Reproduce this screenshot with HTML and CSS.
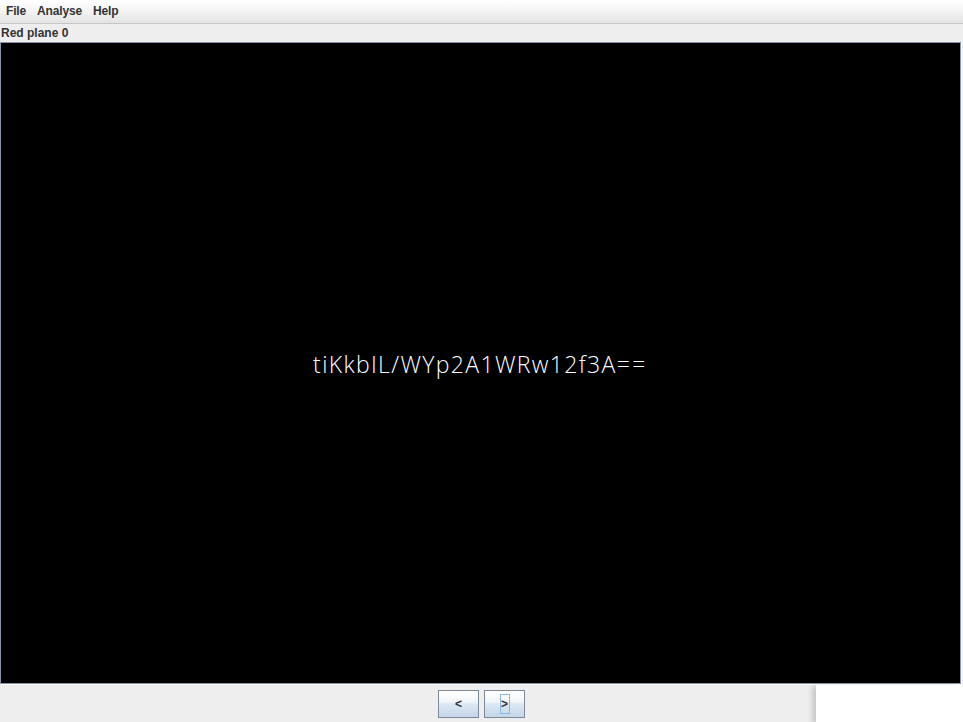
FILE: index.html
```html
<!DOCTYPE html>
<html>
<head>
<meta charset="utf-8">
<link rel="stylesheet" href="styles.css">
</head>
<body>
<div class="app">
  <div class="menubar">
    <span class="menu">File</span>
    <span class="menu">Analyse</span>
    <span class="menu">Help</span>
  </div>
  <div class="label">Red plane 0</div>
  <div class="viewport">
    <div class="image">tiKkbIL/WYp2A1WRw12f3A<span class="eq">==</span></div>
  </div>
  <div class="footer">
    <div class="buttons">
      <button class="btn">&lt;</button>
      <button class="btn focused"><span class="focus">&gt;</span></button>
    </div>
    <div class="popup"></div>
  </div>
</div>
</body>
</html>
```
FILE: styles.css
```css
html, body {
  margin: 0;
  padding: 0;
  background: #eeeeee;
  overflow: hidden;
}
.app {
  width: 963px;
  height: 722px;
  display: flex;
  flex-direction: column;
  font-family: "Liberation Sans", Arial, sans-serif;
}
.menubar {
  height: 23px;
  display: flex;
  align-items: center;
  gap: 11px;
  padding-left: 6px;
  background: linear-gradient(#ffffff 0%, #f6f6f6 40%, #e3e3e3 100%);
  border-bottom: 1px solid #c6c6c6;
  font-size: 12px;
  font-weight: bold;
  color: #333;
}
.menu {
  line-height: 20px;
  letter-spacing: -0.15px;
  margin-top: -2px;
}
.label {
  height: 18px;
  line-height: 19px;
  padding-left: 1px;
  font-size: 12px;
  font-weight: bold;
  color: #333;
  background: #eeeeee;
}
.viewport {
  width: 961px;
  height: 642px;
  border: 1px solid #8796a8;
  box-sizing: border-box;
  background: #000;
  display: flex;
  align-items: center;
  justify-content: center;
  box-shadow: 1px 1px 0 #ffffff;
}
.image {
  color: #ffffff;
  font-family: "Open Sans", "DejaVu Sans", sans-serif;
  font-weight: 300;
  font-size: 23px;
  letter-spacing: 1.35px;
  margin-top: 1px;
  -webkit-font-smoothing: none;
}
.eq {
  letter-spacing: 2.5px;
}
.footer {
  flex: 1;
  position: relative;
  display: flex;
  justify-content: center;
  background: #eeeeee;
  margin-top: 1px;
}
.buttons {
  display: flex;
  gap: 5px;
  padding-top: 5px;
}
.btn {
  width: 41px;
  height: 28px;
  border: 1px solid #7a8a99;
  border-radius: 0;
  background: linear-gradient(#ffffff 0%, #f3f6f9 40%, #dde8f3 50%, #c4d5e7 100%);
  font-family: "Liberation Sans", Arial, sans-serif;
  font-weight: bold;
  font-size: 12px;
  color: #333;
  padding: 0;
  display: flex;
  align-items: center;
  justify-content: center;
}
.focus {
  display: inline-flex;
  align-items: center;
  justify-content: center;
  width: 8px;
  height: 18px;
  border: 1px solid #8cb9e3;
}
.popup {
  position: absolute;
  left: 816px;
  top: 0;
  width: 147px;
  height: 40px;
  background: #ffffff;
  box-shadow: -5px 0 5px -1px rgba(0,0,0,0.16);
}
```
